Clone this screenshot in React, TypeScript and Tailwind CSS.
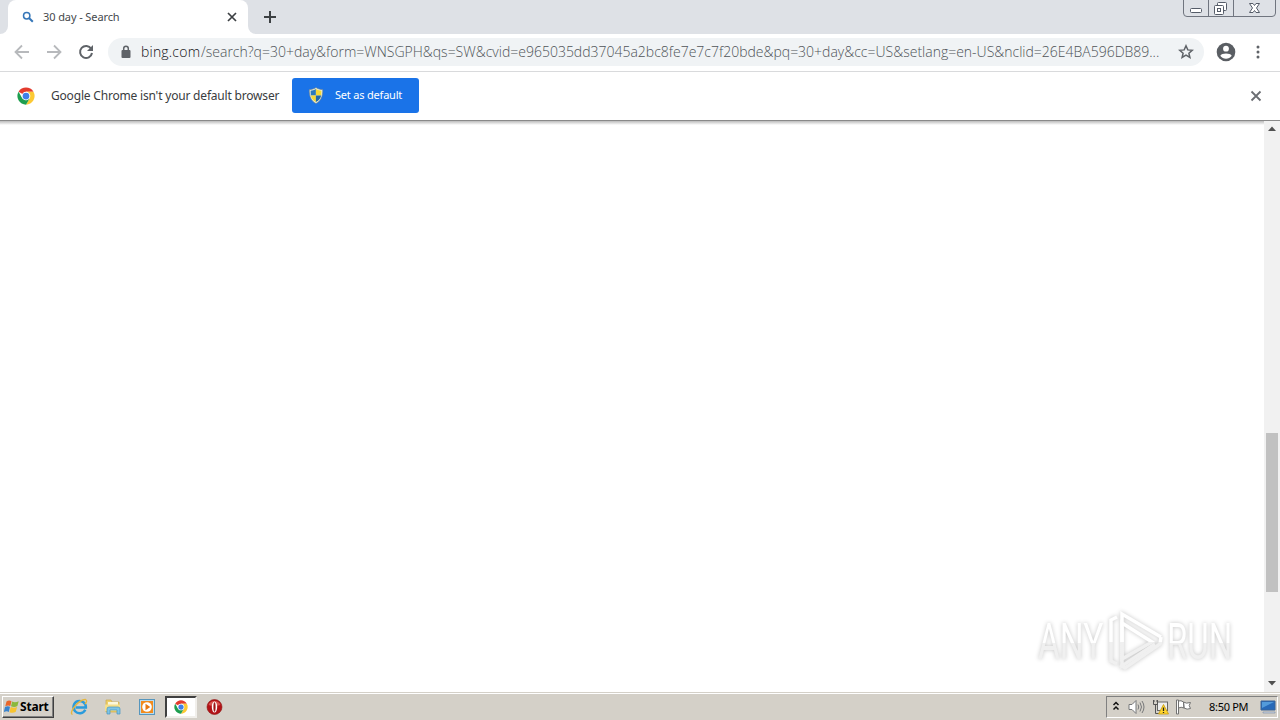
import React from "react";

const ChromeLogo: React.FC<{ className?: string }> = ({ className }) => (
    <svg viewBox="0 0 48 48" className={className}>
        <circle cx="24" cy="24" r="23" fill="#fff" />
        <path d="M24 24 L4.1 12.5 A23 23 0 0 1 43.9 12.5 L24 12.5 Z" fill="#e33b2e" />
        <path d="M24 12.5 H43.9 A23 23 0 0 1 24 47 L34 29.7 Z" fill="#fcc934" />
        <path d="M4.1 12.5 L14 29.7 L24 35.5 L34 29.7 L24 47 A23 23 0 0 1 4.1 12.5 Z" fill="#1e9e4f" />
        <circle cx="24" cy="24" r="11.5" fill="#fff" />
        <circle cx="24" cy="24" r="9" fill="#3f7fe8" />
    </svg>
);

const Shield: React.FC = () => (
    <svg viewBox="0 0 16 17" className="w-4 h-[17px]">
        <path d="M8 0.5 C6 2 3.500 2.500 1.300 2.500 C1 9 3 14 8 16.500 C13 14 15 9 14.700 2.500 C12.500 2.500 10 2 8 0.500Z" fill="#e8edda" stroke="#64788c" strokeWidth=".6" />
        <path d="M7.900 2 C6 3.200 4.500 3.600 2.600 3.700 L2.800 8.500 H7.900Z" fill="#2b79bd" />
        <path d="M7.900 2 C10 3.200 11.500 3.600 13.400 3.700 L13.200 8.500 H7.900Z" fill="#f5d836" />
        <path d="M2.900 8.500 H7.900 V15 C5 13.600 3.300 11.500 2.900 8.500Z" fill="#f5d836" />
        <path d="M13.100 8.500 H7.900 V15 C11 13.600 12.700 11.500 13.100 8.500Z" fill="#2168a8" />
    </svg>
);

const WindowControls: React.FC = () => (
    <svg viewBox="0 0 94 18" className="w-[94px] h-[18px] mr-[3px]" fill="none" stroke="#70757f">
        <path d="M.5 0 V13 Q.5 16.500 4 16.500 H89 Q92.500 16.500 92.500 13 V0 M25.500 0 V16 M50.500 0 V16" />
        <rect x="7.500" y="8.500" width="11" height="4" rx="1" fill="#fff" stroke="#555c68" />
        <rect x="34.500" y="2.500" width="9" height="8" rx="1" fill="#fff" stroke="#555c68" />
        <rect x="31.500" y="5.500" width="9" height="9" rx="1" fill="#fff" stroke="#555c68" />
        <rect x="34.500" y="8.500" width="3" height="3" stroke="#555c68" />
        <path d="M66.500 3.500 H70 L71.500 5.500 L73 3.500 H76.500 L73.500 8 L76.500 12.500 H73 L71.500 10.500 L70 12.500 H66.500 L69.500 8Z" fill="#fff" stroke="#555c68" />
    </svg>
);

const TabStrip: React.FC = () => (
    <header className="flex h-[34px] bg-[#dee1e6] justify-between">
        <div className="flex">
            <div className="w-2 bg-white">
                <div className="h-full bg-[#dee1e6] rounded-br-lg" />
            </div>
            <div className="flex w-60 items-center bg-white rounded-t-lg pl-[14px] pr-[10px]">
                <svg viewBox="0 0 12 12" className="w-3 h-3 shrink-0" fill="none" stroke="#3576b8">
                    <circle cx="4.700" cy="4.700" r="3.200" strokeWidth="1.500" />
                    <path d="M7 7 L10.800 10.800" strokeWidth="2" />
                </svg>
                <span className="ml-[9px] text-[11px] tracking-[-0.1px] text-[#45484c] whitespace-pre">30 day - Search</span>
                <svg viewBox="0 0 12 12" className="ml-auto w-3 h-3" stroke="#3c4043" strokeWidth="1.7">
                    <path d="M2 2 L10 10 M10 2 L2 10" />
                </svg>
            </div>
            <div className="w-2 bg-white">
                <div className="h-full bg-[#dee1e6] rounded-bl-lg" />
            </div>
            <svg viewBox="0 0 14 14" className="w-[14px] h-[14px] ml-[7px] mt-[10px]" stroke="#3c4043" strokeWidth="2">
                <path d="M7 1 V13 M1 7 H13" />
            </svg>
        </div>
        <WindowControls />
    </header>
);

const Toolbar: React.FC = () => (
    <div className="flex h-[38px] items-center bg-white border-b border-[#d9dadc] pl-[14px] pb-px">
        <svg viewBox="0 0 16 16" className="w-4 h-4" fill="none" stroke="#b7b9bc" strokeWidth="1.8">
            <path d="M15 8 H2.500 M8 1.500 L1.500 8 L8 14.500" />
        </svg>
        <svg viewBox="0 0 16 16" className="w-4 h-4 ml-4" fill="none" stroke="#b7b9bc" strokeWidth="1.8">
            <path d="M1 8 H13.500 M8 1.500 L14.500 8 L8 14.500" />
        </svg>
        <svg viewBox="0 0 16 16" className="w-4 h-4 ml-4" fill="none" stroke="#5f6368" strokeWidth="2">
            <path d="M13.200 4.800 A6 6 0 1 0 14 9" />
            <path d="M15 1 V7 H9Z" fill="#5f6368" stroke="none" />
        </svg>
        <div className="flex items-center h-7 w-[1096px] ml-[14px] rounded-full bg-[#f0f3f5] pl-3">
            <svg viewBox="0 0 12 14" className="w-3 h-[14px]" fill="none">
                <rect x="1.500" y="5" width="9" height="8" rx="1" fill="#5f6368" />
                <path d="M3.700 5.500 V3.500 A2.300 2.300 0 0 1 8.300 3.500 V5.500" stroke="#5f6368" strokeWidth="1.500" />
            </svg>
            <div className="flex ml-[9px] w-[1037px] font-['Open_Sans',sans-serif] font-light text-sm whitespace-nowrap">
                <span className="w-[60px] text-[#101114] tracking-[0.2px]">bing.com</span>
                <span className="text-[#4f5358] tracking-[-0.005px]">
                    /search?q=30+day&amp;form=WNSGPH&amp;qs=SW&amp;cvid=e965035dd37045a2bc8fe7e7c7f20bde&amp;pq=30+day&amp;cc=US&amp;setlang=en-US&amp;nclid=26E4BA596DB89...
                </span>
            </div>
            <svg viewBox="0 0 16 16" className="w-4 h-4 shrink-0" fill="none" stroke="#5f6368" strokeWidth="1.5">
                <path d="M8 1.800 L9.800 5.900 L14.200 6.300 L10.900 9.200 L11.900 13.500 L8 11.200 L4.100 13.500 L5.100 9.200 L1.800 6.300 L6.200 5.900Z" />
            </svg>
        </div>
        <svg viewBox="0 0 20 20" className="w-5 h-5 ml-3">
            <circle cx="10" cy="10" r="9.300" fill="#5a5e63" />
            <circle cx="10" cy="6.700" r="2.900" fill="#fff" />
            <path d="M4.300 13.800 C5.500 10.700 14.500 10.700 15.700 13.800 A7 7 0 0 1 4.300 13.800Z" fill="#fff" />
        </svg>
        <svg viewBox="0 0 4 14" className="w-1 h-[14px] ml-5" fill="#5f6368">
            <circle cx="2" cy="2" r="1.500" />
            <circle cx="2" cy="7" r="1.500" />
            <circle cx="2" cy="12" r="1.500" />
        </svg>
    </div>
);

const InfoBar: React.FC = () => (
    <div className="flex h-[49px] shrink-0 items-center bg-white border-b border-[#898989] pl-[17px] pr-[18px]">
        <ChromeLogo className="w-[18px] h-[18px]" />
        <span className="ml-4 w-[241px] text-[12px] tracking-[-0.19px] text-[#3a3c40] whitespace-nowrap">
            Google Chrome isn't your default browser
        </span>
        <button className="flex h-[35px] w-[127px] mb-[2px] items-center rounded-[3px] bg-[#1a73e8] pl-4 text-[11px] text-white">
            <Shield />
            <span className="ml-[11px] tracking-[-0.2px] whitespace-nowrap">Set as default</span>
        </button>
        <svg viewBox="0 0 12 12" className="ml-auto w-3 h-3" stroke="#6b6e73" strokeWidth="1.8">
            <path d="M1.500 1.500 L10.500 10.500 M10.500 1.500 L1.500 10.500" />
        </svg>
    </div>
);

const Watermark: React.FC = () => (
    <div className="absolute left-[1036px] top-[607px] flex h-[68px] w-[200px] items-center drop-shadow-[0_0_2px_#c4c4c4]">
        <span className="w-[70px] pl-[2px] text-[50px] leading-[68px]">
            <span className="inline-block origin-left scale-x-[.67] bg-linear-to-b from-white from-52% to-[#f0f0f0] to-52% bg-clip-text text-transparent font-['Roboto',sans-serif]">ANY</span>
        </span>
        <svg viewBox="0 0 60 68" className="w-[60px] h-[68px] shrink-0" fill="none" stroke="url(#mark)" strokeWidth="3.500">
            <defs>
                <linearGradient id="mark" gradientUnits="userSpaceOnUse" x1="0" y1="0" x2="0" y2="68">
                    <stop offset=".52" stopColor="#fff" />
                    <stop offset=".52" stopColor="#f0f0f0" />
                </linearGradient>
            </defs>
            <path d="M11 10 L5 13 V54 L11 57" />
            <path d="M49 37 L16 59 V7 L55 30" />
            <path d="M16 16 L46 35 L16 52 Z" />
            <path d="M55 30 L54 37 L19 61 L14 58" />
        </svg>
        <span className="w-[70px] pl-px text-[50px] leading-[68px]">
            <span className="inline-block origin-left scale-x-[.66] bg-linear-to-b from-white from-52% to-[#f0f0f0] to-52% bg-clip-text text-transparent font-['Roboto',sans-serif]">RUN</span>
        </span>
    </div>
);

const Scrollbar: React.FC = () => (
    <div className="flex flex-col w-4 bg-[#f1f1f1] items-center">
        <svg viewBox="0 0 16 16" className="w-4 h-4"><path d="M4 10 L8 5.500 L12 10Z" fill="#505050" /></svg>
        <div className="mt-[296px] h-[159px] w-3 bg-[#c1c1c1]" />
        <svg viewBox="0 0 16 16" className="mt-auto w-4 h-4"><path d="M4 5 L8 9.500 L12 5Z" fill="#505050" /></svg>
    </div>
);

const Taskbar: React.FC = () => (
    <footer className="flex h-[28px] bg-[#d4d0c8] border-t border-[#d4d0c8] shadow-[inset_0_1px_0_#fff] pt-[3px] pl-[2px] pr-[2px]">
        <button className="flex h-[22px] w-[52px] items-center border border-t-white border-l-white border-r-[#404040] border-b-[#404040] shadow-[inset_-1px_-1px_0_#808080] pl-px">
            <svg viewBox="0 0 16 16" className="w-4 h-4 shrink-0">
                <path d="M2.500 2.500 Q5 .8 7.500 2.200 L6.300 7 Q4 5.800 1.300 7.300Z" fill="#e9662a" />
                <path d="M8.200 2.500 Q11 4 14.700 2.200 L13.400 7 Q10.500 8.600 7 7.300Z" fill="#8bb83b" />
                <path d="M1 7.900 Q3.700 6.500 6 7.700 L4.800 12.900 Q2.500 11.700 -.2 13.200Z" fill="#3983cd" />
                <path d="M6.700 8.100 Q10.300 9.500 13.100 8 L11.800 12.800 Q9 14.600 5.500 13.300Z" fill="#f7c32f" />
            </svg>
            <span className="text-[12px] font-bold tracking-[-0.2px] text-black">Start</span>
        </button>

        {/* quick launch */}
        <svg viewBox="0 0 18 18" className="w-[18px] h-[18px] ml-4 mt-[2px]" fill="none">
            <path d="M15.300 11.800 A6.200 6.200 0 1 1 15.900 9.400 H5.500" stroke="#2a9bdc" strokeWidth="2.500" />
            <path d="M2.500 16.500 C-2 15 9 1 15.500 1.500 Q18 2.500 15 6" stroke="#e5b63e" strokeWidth="1.300" />
        </svg>
        <svg viewBox="0 0 18 18" className="w-[18px] h-[18px] ml-4 mt-[2px]">
            <path d="M2 2 H7 L8 4 H15 V14 H2Z" fill="#edcf69" stroke="#cda94b" strokeWidth=".7" />
            <path d="M4 4 H14 V8 H4Z" fill="#fbf7dc" />
            <path d="M1 6.500 H16 V13 H1Z" fill="#f5df8c" />
            <path d="M3 16 V11 Q3 9 5 9 H14 Q16 9 16 11 V16 H13 V12 H6 V16Z" fill="#7fc4e5" stroke="#4697c2" strokeWidth=".7" />
        </svg>
        <svg viewBox="0 0 18 18" className="w-[18px] h-[18px] ml-4 mt-[2px]">
            <rect x="1.500" y="1.500" width="15" height="15" fill="#b9dcf0" stroke="#5696bd" />
            <rect x="3" y="3" width="12" height="12" fill="#f28b1d" />
            <circle cx="9" cy="9" r="4.800" fill="#fff" />
            <path d="M7.500 5.800 L12.300 9 L7.500 12.200Z" fill="#e77812" />
        </svg>
        <div className="flex h-[22px] w-8 ml-[9px] items-center justify-center bg-white border-2 border-t-[#404040] border-l-[#404040] border-r-[#f1efeb] border-b-[#f1efeb]">
            <ChromeLogo className="w-[14px] h-[14px]" />
        </div>
        <svg viewBox="0 0 18 18" className="w-[18px] h-[18px] ml-[9px] mt-[2px]">
            <circle cx="8.500" cy="9" r="7.500" fill="#b31217" stroke="#8b1411" strokeWidth=".6" />
            <path d="M2.500 7 A6.500 6.500 0 0 1 14.500 7 Q8.500 9 2.500 7Z" fill="#d95550" />
            <ellipse cx="8.500" cy="9" rx="2.700" ry="5.500" fill="#fff" />
            <ellipse cx="8.500" cy="9" rx="1.100" ry="4.700" fill="#a01515" />
        </svg>

        <div className="flex h-[22px] w-[172px] ml-auto items-center border border-t-[#808080] border-l-[#808080] border-r-white border-b-white pl-[5px]">
            <svg viewBox="0 0 8 10" className="w-2 h-[10px] mb-[3px]" fill="none" stroke="#111" strokeWidth="1.5">
                <path d="M1.500 4 L4 1.500 L6.500 4 M1.500 8.500 L4 6 L6.500 8.500" />
            </svg>
            <svg viewBox="0 0 18 16" className="w-[18px] h-4 ml-[8px]" fill="none" stroke="#77787a">
                <path d="M1 5.500 H4 L8 1.500 V14.500 L4 10.500 H1Z" fill="#fff" />
                <path d="M10 5.500 Q11.500 8 10 10.500 M12 3.500 Q15 8 12 12.500 M14 2 Q18 8 14 14" />
            </svg>
            <svg viewBox="0 0 17 16" className="w-[17px] h-4 ml-[6px]">
                <rect x="5.500" y="3" width="10" height="8.500" fill="#eee" stroke="#666" />
                <path d="M1.500 1 V5.500 H5.500 V1 M3.500 5 V14.500 H7 M2 1 V3 M5 1 V3" fill="none" stroke="#555" />
                <path d="M11.500 5.500 L16.500 15 H6.500Z" fill="#ffd52e" stroke="#c79a0a" strokeWidth=".8" />
                <path d="M11.500 8.500 V12 M11.500 12.900 V14" stroke="#222" strokeWidth="1.300" />
            </svg>
            <svg viewBox="0 0 18 16" className="w-[18px] h-4 ml-[6px]" fill="#fff" stroke="#727272">
                <path d="M1.500 1 H3.500 V15 H1.500Z M3.500 2 Q6 1 8.500 3 L9 9 Q6 7.500 3.500 9Z M8.500 3 Q11 5 15.500 3.500 L14.200 6.500 L15.500 9.500 Q12 11 9 9Z" />
            </svg>
            <span className="ml-4 w-[51px] text-[11px] tracking-[-0.3px] whitespace-nowrap text-black">8:50 PM</span>
            <svg viewBox="0 0 16 14" className="w-4 h-[14px] shrink-0">
                <path d="M1 1 H15 V10 H1Z" fill="#2769b8" stroke="#3a6597" />
                <path d="M2 2 H14 L2 8Z" fill="#539bdb" />
                <path d="M3 12 H15 V13 H3Z" fill="#e9edf3" stroke="#617b9b" strokeWidth=".5" />
            </svg>
        </div>
    </footer>
);

const App: React.FC = () => {
    return (
        <div className="relative flex h-[720px] w-[1280px] flex-col overflow-hidden bg-white font-['Noto_Sans',sans-serif]">
            <TabStrip />
            <Toolbar />
            <InfoBar />
            <main className="flex flex-1 justify-between">
                <div className="flex-1 bg-white">
                    <div className="h-1 bg-linear-to-b from-[#bcbcbc] to-white" />
                </div>
                <Scrollbar />
            </main>
            <Taskbar />
            <Watermark />
        </div>
    );
};

export default App;
